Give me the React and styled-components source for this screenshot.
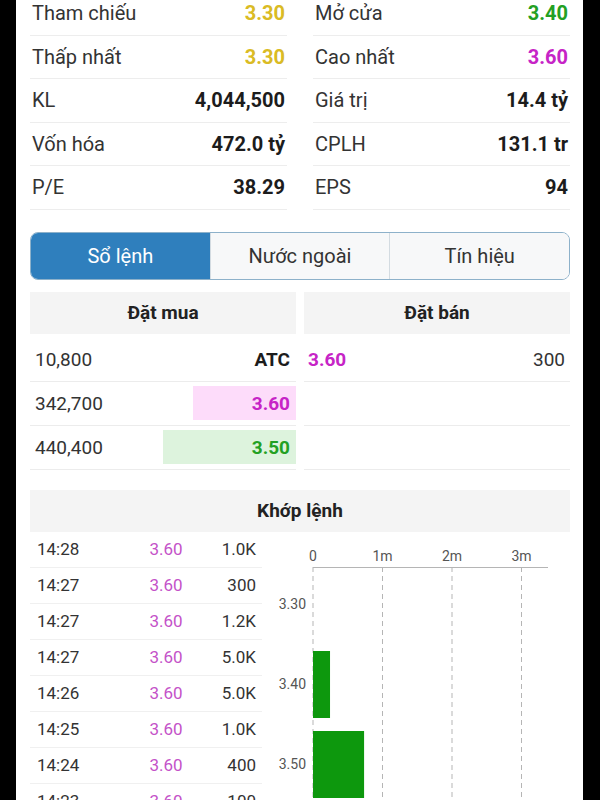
import React from 'react';
import styled, { createGlobalStyle } from 'styled-components';

const GlobalStyle = createGlobalStyle`
  html, body {
    margin: 0;
    padding: 0;
    background: #000;
  }
  body {
    font-family: Roboto, "Noto Sans", "Liberation Sans", sans-serif;
  }
`;

const YELLOW = '#dabb24';
const GREEN = '#23a023';
const PURPLE = '#c624c6';

const Page = styled.div`
  height: 800px;
  overflow: hidden;
  padding-left: 16px;
  background: #000;
`;

const Screen = styled.div`
  width: 567px;
  height: 800px;
  overflow: hidden;
  box-sizing: border-box;
  padding: 0 13px 0 14px;
  background: #fff;
`;

// stats block
const StatsGrid = styled.div`
  display: grid;
  grid-template-columns: 1fr 1fr;
  column-gap: 26px;
  margin-top: -8px;
`;

const StatRow = styled.div`
  height: 43.5px;
  box-sizing: border-box;
  border-bottom: 1px solid #ededed;
  display: flex;
  align-items: center;
  justify-content: space-between;
  padding: 0 2px;
  font-size: 20px;
`;

const StatLabel = styled.span`
  color: #333;
`;

const StatValue = styled.span`
  font-weight: 700;
  color: ${(p) => p.$color || '#1c1c1c'};
`;

// tabs
const Tabs = styled.div`
  margin-top: 22px;
  display: flex;
  height: 48px;
  box-sizing: border-box;
  border: 1.5px solid #8db1ca;
  border-radius: 8px;
  overflow: hidden;
`;

const Tab = styled.div`
  flex: 1;
  display: flex;
  align-items: center;
  justify-content: center;
  font-size: 20px;
  background: ${(p) => (p.$active ? '#2f7fbd' : '#f7f8f9')};
  color: ${(p) => (p.$active ? '#fff' : '#333')};
  & + & {
    border-left: 1px solid #d3dbe1;
  }
`;

// order book
const Book = styled.div`
  margin-top: 12px;
  display: grid;
  grid-template-columns: 1fr 1fr;
  column-gap: 8px;
`;

const SectionHead = styled.div`
  height: 42px;
  background: #f4f4f4;
  display: flex;
  align-items: center;
  justify-content: center;
  font-weight: 700;
  font-size: 19px;
  color: #222;
`;

const BookRows = styled.div`
  padding-top: 4px;
`;

const BookRow = styled.div`
  height: 44px;
  box-sizing: border-box;
  border-bottom: 1px solid #ececec;
  display: flex;
  align-items: center;
  justify-content: space-between;
  padding: ${(p) => (p.$side === 'ask' ? '0 5px 0 4px' : '0 0 0 5px')};
  font-size: 19px;
  color: #333;
`;

const PriceBar = styled.div`
  height: 34px;
  box-sizing: border-box;
  display: flex;
  align-items: center;
  justify-content: flex-end;
  padding-right: 6px;
  background: ${(p) => p.$bg || 'transparent'};
  color: ${(p) => p.$color || '#1c1c1c'};
  font-weight: 700;
`;

const AskPrice = styled.span`
  color: ${PURPLE};
  font-weight: 700;
`;

// matched trades
const MatchSection = styled.div`
  margin-top: 20px;
`;

const MatchBody = styled.div`
  display: flex;
  align-items: flex-start;
`;

const TradeList = styled.div`
  width: 232px;
  flex-shrink: 0;
`;

const TradeRow = styled.div`
  height: 36px;
  box-sizing: border-box;
  border-bottom: 1px solid #f0f0f0;
  display: flex;
  align-items: center;
  font-size: 17px;
  color: #333;
`;

const TradeTime = styled.span`
  width: 100px;
  padding-left: 7px;
`;

const TradePrice = styled.span`
  width: 58px;
  text-align: center;
  color: #c452c8;
`;

const TradeVol = styled.span`
  flex: 1;
  text-align: right;
  padding-right: 6px;
`;

const Chart = styled.svg`
  display: block;
  flex-shrink: 0;
`;

const stats = [
  ['Tham chiếu', '3.30', YELLOW],
  ['Mở cửa', '3.40', GREEN],
  ['Thấp nhất', '3.30', YELLOW],
  ['Cao nhất', '3.60', PURPLE],
  ['KL', '4,044,500'],
  ['Giá trị', '14.4 tỷ'],
  ['Vốn hóa', '472.0 tỷ'],
  ['CPLH', '131.1 tr'],
  ['P/E', '38.29'],
  ['EPS', '94'],
];

const bids = [
  { vol: '10,800', price: 'ATC' },
  { vol: '342,700', price: '3.60', color: PURPLE, bg: '#fddcfa', w: 103 },
  { vol: '440,400', price: '3.50', color: GREEN, bg: '#ddf3dd', w: 133 },
];

const trades = [
  ['14:28', '3.60', '1.0K'],
  ['14:27', '3.60', '300'],
  ['14:27', '3.60', '1.2K'],
  ['14:27', '3.60', '5.0K'],
  ['14:26', '3.60', '5.0K'],
  ['14:25', '3.60', '1.0K'],
  ['14:24', '3.60', '400'],
  ['14:23', '3.60', '100'],
];

const X0 = 51;
const STEP = 69.5;
const AXIS_Y = 35;

const VolumeChart = () => {
  const ticks = ['0', '1m', '2m', '3m'];
  const levels = [
    { label: '3.30', y: 72, vol: 0 },
    { label: '3.40', y: 152, vol: 0.245 },
    { label: '3.50', y: 232, vol: 0.735 },
  ];
  return (
    <Chart width="308" height="270" viewBox="0 0 308 270">
      {ticks.map((t, i) => (
        <g key={t}>
          <text
            x={X0 + i * STEP}
            y={AXIS_Y - 6}
            textAnchor="middle"
            fontSize="14"
            fill="#555"
            fontFamily="Roboto, sans-serif"
          >
            {t}
          </text>
          <line
            x1={X0 + i * STEP}
            y1={AXIS_Y}
            x2={X0 + i * STEP}
            y2="270"
            stroke="#b5b5b5"
            strokeDasharray="5 4"
          />
        </g>
      ))}
      <line x1={X0} y1={AXIS_Y + 0.5} x2="286" y2={AXIS_Y + 0.5} stroke="#b5b5b5" />
      {levels.map((l) => (
        <g key={l.label}>
          <text
            x="44"
            y={l.y + 5}
            textAnchor="end"
            fontSize="14"
            fill="#555"
            fontFamily="Roboto, sans-serif"
          >
            {l.label}
          </text>
          {l.vol > 0 && (
            <rect x={X0} y={l.y - 33} width={l.vol * STEP} height="67" fill="#0d980d" />
          )}
        </g>
      ))}
    </Chart>
  );
};

const App = () => {
  return (
    <Page>
      <GlobalStyle />
      <Screen>
        <StatsGrid>
          {stats.map(([label, value, color], i) => (
            <StatRow key={i}>
              <StatLabel>{label}</StatLabel>
              <StatValue $color={color}>{value}</StatValue>
            </StatRow>
          ))}
        </StatsGrid>

        <Tabs>
          <Tab $active>Sổ lệnh</Tab>
          <Tab>Nước ngoài</Tab>
          <Tab>Tín hiệu</Tab>
        </Tabs>

        <Book>
          <div>
            <SectionHead>Đặt mua</SectionHead>
            <BookRows>
              {bids.map((b, i) => (
                <BookRow key={i}>
                  <span>{b.vol}</span>
                  <PriceBar $bg={b.bg} $color={b.color} style={b.w ? { width: b.w } : undefined}>
                    {b.price}
                  </PriceBar>
                </BookRow>
              ))}
            </BookRows>
          </div>
          <div>
            <SectionHead>Đặt bán</SectionHead>
            <BookRows>
              <BookRow $side="ask">
                <AskPrice>3.60</AskPrice>
                <span>300</span>
              </BookRow>
              <BookRow $side="ask" />
              <BookRow $side="ask" />
            </BookRows>
          </div>
        </Book>

        <MatchSection>
          <SectionHead>Khớp lệnh</SectionHead>
          <MatchBody>
            <TradeList>
              {trades.map(([time, price, vol], i) => (
                <TradeRow key={i}>
                  <TradeTime>{time}</TradeTime>
                  <TradePrice>{price}</TradePrice>
                  <TradeVol>{vol}</TradeVol>
                </TradeRow>
              ))}
            </TradeList>
            <VolumeChart />
          </MatchBody>
        </MatchSection>
      </Screen>
    </Page>
  );
};

export default App;
